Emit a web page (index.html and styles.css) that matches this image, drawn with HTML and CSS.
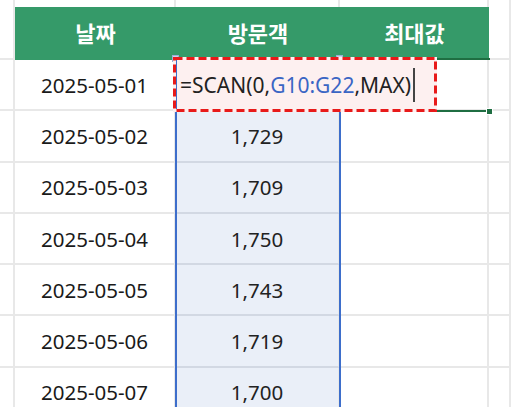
FILE: index.html
```html
<!DOCTYPE html>
<html lang="ko">
<head>
<meta charset="utf-8">
<link rel="stylesheet" href="styles.css">
</head>
<body>
<div class="sheet">
  <div class="row top">
    <div class="c"></div><div class="c"></div><div class="c"></div><div class="c"></div><div class="c"></div>
  </div>
  <div class="row head">
    <div class="c"></div>
    <div class="c h">날짜</div>
    <div class="c h">방문객</div>
    <div class="c h">최대값</div>
    <div class="c"></div>
  </div>
  <div class="row data">
    <div class="c"></div><div class="c d">2025-05-01</div><div class="c rng"></div><div class="c"></div><div class="c"></div>
  </div>
  <div class="row data">
    <div class="c"></div><div class="c d">2025-05-02</div><div class="c rng">1,729</div><div class="c"></div><div class="c"></div>
  </div>
  <div class="row data">
    <div class="c"></div><div class="c d">2025-05-03</div><div class="c rng">1,709</div><div class="c"></div><div class="c"></div>
  </div>
  <div class="row data">
    <div class="c"></div><div class="c d">2025-05-04</div><div class="c rng">1,750</div><div class="c"></div><div class="c"></div>
  </div>
  <div class="row data">
    <div class="c"></div><div class="c d">2025-05-05</div><div class="c rng">1,743</div><div class="c"></div><div class="c"></div>
  </div>
  <div class="row data">
    <div class="c"></div><div class="c d">2025-05-06</div><div class="c rng">1,719</div><div class="c"></div><div class="c"></div>
  </div>
  <div class="row data">
    <div class="c"></div><div class="c d">2025-05-07</div><div class="c rng">1,700</div><div class="c"></div><div class="c"></div>
  </div>

  <div class="range"></div>
  <div class="rhandle rh-l"></div>
  <div class="rhandle rh-r"></div>
  <div class="sel"></div>
  <div class="fill-handle"></div>
  <div class="edit">
    <div class="edit-inner">=SCAN(0,<span class="ref">G10:G22</span>,MAX)<span class="caret"></span></div>
    <svg class="dash" width="264" height="55" viewBox="0 0 264 55">
      <rect x="1.5" y="1.5" width="261" height="52" fill="none" stroke="#e81a1a" stroke-width="3" stroke-dasharray="8 4"/>
    </svg>
  </div>
</div>
</body>
</html>
```

FILE: styles.css
```css
html, body {
  margin: 0;
  padding: 0;
  background: #ffffff;
}
body {
  width: 511px;
  height: 407px;
  overflow: hidden;
  font-family: "Noto Sans", "Noto Sans CJK KR", sans-serif;
}
.sheet {
  position: relative;
  width: 511px;
  height: 407px;
  overflow: hidden;
}
.row {
  display: grid;
  grid-template-columns: 15px 161px 164px 149px 22px;
}
.c {
  box-sizing: border-box;
  border-right: 2px solid #e8e8e8;
  border-bottom: 2px solid #e8e8e8;
  display: flex;
  align-items: center;
  justify-content: center;
  color: #1a1a1a;
  font-size: 20.5px;
}
.top { height: 7px; }
.top .c { border-bottom: none; }
.head { height: 53px; }
.head .h {
  background: #359a69;
  border-right: none;
  border-bottom: 2px solid #359a69;
  color: #ffffff;
  font-family: "Noto Sans CJK KR", sans-serif;
  font-weight: 700;
  font-size: 22px;
  padding-bottom: 1px;
}
.data { height: 51.3px; }
.rng {
  background: #eaeff8;
  border-bottom-color: #d2d8e3;
  color: #222;
}
.range {
  position: absolute;
  left: 175px;
  top: 58px;
  width: 166px;
  height: 400px;
  box-sizing: border-box;
  border: 2px solid #3d6ecb;
}
.rhandle {
  position: absolute;
  top: 55px;
  width: 5px;
  height: 5px;
  background: #c9d5ea;
  border: 1px solid #9bb0d6;
}
.rh-l { left: 172px; }
.rh-r { left: 336px; }
.sel {
  position: absolute;
  left: 338px;
  top: 58px;
  width: 152px;
  height: 54px;
  box-sizing: border-box;
  border-top: 2px solid #1f6e42;
  border-bottom: 2px solid #1f6e42;
}
.fill-handle {
  position: absolute;
  left: 486px;
  top: 108px;
  width: 5px;
  height: 5px;
  background: #1f6e42;
  border: 1px solid #ffffff;
}
.edit {
  position: absolute;
  left: 173px;
  top: 57px;
  width: 264px;
  height: 55px;
  box-sizing: border-box;
  padding: 3px;
  background: #fdf0f0;
}
.dash {
  position: absolute;
  left: 0;
  top: 0;
}
.edit-inner {
  box-sizing: border-box;
  height: 100%;
  border-left: 1px solid #3d6ecb;
  padding-left: 3px;
  display: flex;
  align-items: center;
  font-size: 21px;
  color: #222;
  white-space: nowrap;
}
.ref { color: #3a65c4; }
.caret {
  display: inline-block;
  width: 2px;
  height: 34px;
  margin-left: 2px;
  background: #444;
}
```
